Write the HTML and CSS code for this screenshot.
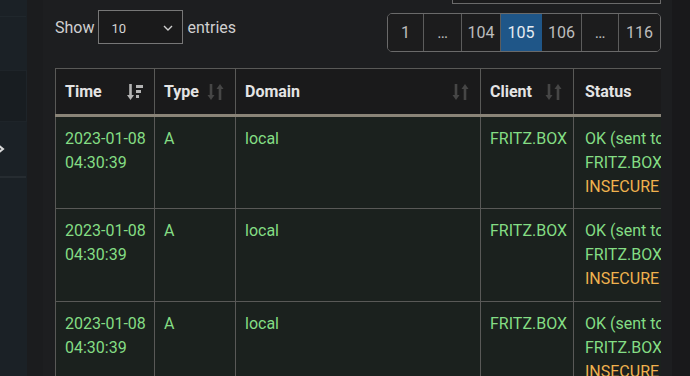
FILE: index.html
```html
<!DOCTYPE html>
<html lang="en">
<head>
<meta charset="utf-8">
<title>Query Log</title>
<link rel="stylesheet" href="styles.css">
</head>
<body>
<div class="layout">
  <aside class="sidebar">
    <div class="side-line"></div>
    <div class="side-box"></div>
    <div class="side-item">
      <svg class="side-icon" width="6" height="10" viewBox="0 0 6 10"><path d="M-2 1 L3 5 L-2 9" fill="none" stroke="#d8d8d8" stroke-width="2"/></svg>
    </div>
    <div class="side-line2"></div>
  </aside>
  <div class="gutter"></div>
  <main class="main">
    <div class="search-row">
      <div class="search-box"></div>
    </div>
    <div class="controls">
      <div class="length">
        <span>Show</span>
        <div class="select"><span>10</span>
          <svg width="10" height="6" viewBox="0 0 10 6"><path d="M1 1 L5 5 L9 1" fill="none" stroke="#cfcfcf" stroke-width="1.4"/></svg>
        </div>
        <span>entries</span>
      </div>
      <nav class="pager">
        <span class="pg w36">1</span>
        <span class="pg w38">…</span>
        <span class="pg w39">104</span>
        <span class="pg w41 active">105</span>
        <span class="pg w40">106</span>
        <span class="pg w37">…</span>
        <span class="pg w41 last">116</span>
      </nav>
    </div>
    <div class="table-wrap">
      <table class="log">
        <colgroup>
          <col class="c-time"><col class="c-type"><col class="c-domain"><col class="c-client"><col class="c-status">
        </colgroup>
        <thead>
          <tr>
            <th><div class="th"><span>Time</span>
              <svg class="sort on" width="16" height="18" viewBox="0 0 16 18"><path d="M3.5 1 V14" stroke="currentColor" stroke-width="2.6"/><path d="M0 12 L3.5 17 L7 12 Z" fill="currentColor"/><rect x="9" y="2" width="7" height="3" fill="currentColor"/><rect x="9" y="7" width="5" height="3" fill="currentColor"/><rect x="9" y="12" width="3" height="3" fill="currentColor"/></svg>
            </div></th>
            <th><div class="th"><span>Type</span>
              <svg class="sort" width="17" height="18" viewBox="0 0 17 18"><path d="M4 1 V14" stroke="currentColor" stroke-width="2.6"/><path d="M0.5 12 L4 17 L7.5 12 Z" fill="currentColor"/><path d="M13 4 V17" stroke="currentColor" stroke-width="2.6"/><path d="M9.5 6 L13 1 L16.5 6 Z" fill="currentColor"/></svg>
            </div></th>
            <th><div class="th"><span>Domain</span>
              <svg class="sort" width="17" height="18" viewBox="0 0 17 18"><path d="M4 1 V14" stroke="currentColor" stroke-width="2.6"/><path d="M0.5 12 L4 17 L7.5 12 Z" fill="currentColor"/><path d="M13 4 V17" stroke="currentColor" stroke-width="2.6"/><path d="M9.5 6 L13 1 L16.5 6 Z" fill="currentColor"/></svg>
            </div></th>
            <th><div class="th"><span>Client</span>
              <svg class="sort" width="17" height="18" viewBox="0 0 17 18"><path d="M4 1 V14" stroke="currentColor" stroke-width="2.6"/><path d="M0.5 12 L4 17 L7.5 12 Z" fill="currentColor"/><path d="M13 4 V17" stroke="currentColor" stroke-width="2.6"/><path d="M9.5 6 L13 1 L16.5 6 Z" fill="currentColor"/></svg>
            </div></th>
            <th><div class="th"><span>Status</span></div></th>
          </tr>
        </thead>
        <tbody>
          <tr>
            <td>2023-01-08<br>04:30:39</td>
            <td>A</td>
            <td>local</td>
            <td>FRITZ.BOX</td>
            <td class="status">OK (sent to<br>FRITZ.BOX#53)<br><span class="warn">INSECURE</span></td>
          </tr>
          <tr>
            <td>2023-01-08<br>04:30:39</td>
            <td>A</td>
            <td>local</td>
            <td>FRITZ.BOX</td>
            <td class="status">OK (sent to<br>FRITZ.BOX#53)<br><span class="warn">INSECURE</span></td>
          </tr>
          <tr>
            <td>2023-01-08<br>04:30:39</td>
            <td>A</td>
            <td>local</td>
            <td>FRITZ.BOX</td>
            <td class="status">OK (sent to<br>FRITZ.BOX#53)<br><span class="warn">INSECURE</span></td>
          </tr>
        </tbody>
      </table>
    </div>
  </main>
  <div class="edge"></div>
</div>
</body>
</html>
```

FILE: styles.css
```css
* { box-sizing: border-box; }
html, body { margin: 0; padding: 0; }
body {
  background: #1d1e20;
  font-family: Roboto, "Liberation Sans", sans-serif;
  font-size: 16px;
  color: #d4d4d4;
  width: 690px;
  height: 376px;
  overflow: hidden;
}
.layout {
  display: flex;
  height: 376px;
}
.sidebar {
  width: 27px;
  flex: none;
  background: #1b2126;
  display: flex;
  flex-direction: column;
  padding-top: 16px;
  overflow: hidden;
}
.side-line { height: 1px; background: #20272c; margin-right: 1px; }
.side-box {
  margin-top: 53px;
  height: 52px;
  background: #181d21;
  border: 1px solid #1e2429;
  border-left: none;
}
.side-item {
  height: 54px;
  display: flex;
  align-items: center;
}
.side-icon { display: block; }
.side-line2 { height: 2px; background: #262c31; margin-right: 1px; }
.gutter {
  width: 16px;
  flex: none;
  background: #1b1c1e;
}
.main {
  width: 629px;
  flex: none;
  padding: 0 11px 0 12px;
  background: #1d1e20;
  overflow: hidden;
}
.edge {
  flex: 1;
  background: #19191b;
}
.search-row {
  display: flex;
  justify-content: flex-end;
  height: 4px;
  overflow: visible;
}
.search-box {
  width: 209px;
  height: 34px;
  margin-top: -30px;
  border: 1px solid #6a6a6a;
  background: #1b1b1c;
}
.controls {
  display: flex;
  justify-content: space-between;
  align-items: flex-start;
  margin-top: 6px;
}
.length {
  display: flex;
  align-items: center;
  gap: 4px;
  height: 34px;
  color: #d0d0d0;
  font-size: 16px;
}
.select {
  width: 85px;
  height: 34px;
  border: 1px solid #777;
  background: #1a1a1b;
  display: flex;
  align-items: center;
  justify-content: space-between;
  padding: 3px 9px 0 12px;
  font-size: 13px;
  color: #d6d6d6;
}
.select svg { margin-top: -2px; }
.pager {
  display: flex;
  margin-top: 3px;
  height: 39px;
  border: 1px solid #6a6a6a;
  border-radius: 5px;
  overflow: hidden;
}
.pg {
  display: flex;
  align-items: center;
  justify-content: center;
  border-right: 1px solid #5c5c5c;
  color: #bdbdbd;
  background: #1c1c1d;
  font-size: 16px;
}
.pg.last { border-right: none; }
.pg.active { background: #1f5688; color: #e6ecf2; border-right-color: #1f5688; }
.w36 { width: 36px; }
.w37 { width: 37px; }
.w38 { width: 38px; }
.w39 { width: 39px; }
.w40 { width: 40px; }
.w41 { width: 41px; }
.table-wrap {
  margin-top: 16px;
  width: 606px;
  overflow: hidden;
}
.log {
  border-collapse: collapse;
  table-layout: fixed;
  width: 700px;
}
.c-time { width: 99px; }
.c-type { width: 81px; }
.c-domain { width: 245px; }
.c-client { width: 93px; }
.c-status { width: 182px; }
.log th {
  background: #1a1a1b;
  border: 1px solid #595957;
  border-bottom: 3px solid #8a8478;
  height: 47px;
  padding: 0 11px 0 9px;
  text-align: left;
  color: #e4e4e4;
  font-weight: 700;
  font-size: 16px;
}
.th {
  display: flex;
  align-items: center;
  justify-content: space-between;
}
.sort { color: #464646; display: block; }
.sort.on { color: #b4b4b4; }
.log td {
  background: #1b211e;
  border: 1px solid #595957;
  vertical-align: top;
  height: 93px;
  padding: 10px 6px 0 9px;
  line-height: 24px;
  color: #84dd84;
  font-size: 16px;
  white-space: nowrap;
  overflow: hidden;
}
.log td.status { padding-left: 11px; overflow: visible; }
.log th:last-child { padding-left: 11px; }
.warn { color: #f0b24e; }
```
